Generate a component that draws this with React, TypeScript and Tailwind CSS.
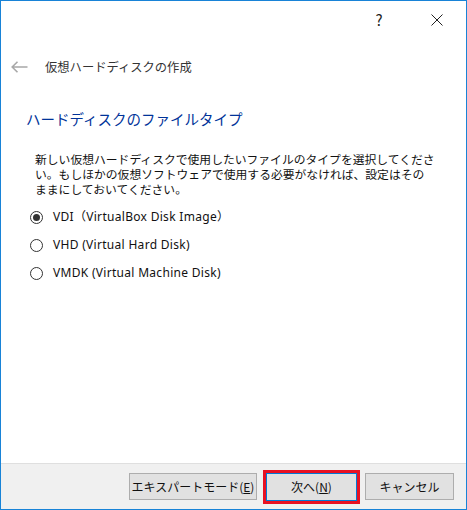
import React, { useState } from "react";

const font = { fontFamily: '"Noto Sans CJK JP", "Noto Sans", sans-serif' };
const latin = { fontFamily: '"Noto Sans", "Noto Sans CJK JP", sans-serif' };

const OPTIONS = [
  { id: "vdi", label: "VDI（VirtualBox Disk Image）" },
  { id: "vhd", label: "VHD (Virtual Hard Disk)" },
  { id: "vmdk", label: "VMDK (Virtual Machine Disk)" },
];

function Radio({ checked }: { checked: boolean }) {
  return (
    <span className="flex h-[13px] w-[13px] items-center justify-center rounded-full border border-[#333333] bg-white">
      {checked && <span className="h-[7px] w-[7px] rounded-full bg-[#333333]" />}
    </span>
  );
}

export default function App() {
  const [sel, setSel] = useState("vdi");
  return (
    <div
      className="flex h-[510px] w-[467px] flex-col border border-[#1883d7] bg-white text-[12px] text-[#1a1a1a]"
      style={font}
    >
      {/* タイトルバー */}
      <div className="flex h-[39px] items-start justify-end">
        <div className="mt-[9px] flex items-center">
          <span className="w-[20px] text-center text-[15px] leading-[20px] text-[#222]">?</span>
          <svg width="12" height="12" viewBox="0 0 12 12" className="ml-[42px] mr-[23px]">
            <path d="M0.5 0.5 L11.5 11.5 M11.5 0.5 L0.5 11.5" stroke="#222" strokeWidth="1" />
          </svg>
        </div>
      </div>

      {/* 戻る + タイトル */}
      <div className="mt-[15px] flex h-[24px] items-center pl-[10px]">
        <svg width="17" height="12" viewBox="0 0 17 12">
          <path d="M1 6 H16.5 M6.5 0.8 L1.2 6 L6.5 11.2" stroke="#a8a8a8" strokeWidth="1.6" fill="none" />
        </svg>
        <span className="ml-[17px] text-[12.3px] text-[#333333]">仮想ハードディスクの作成</span>
      </div>

      {/* 見出し */}
      <div className="mt-[29px] h-[21px] pl-[25px] text-[14.5px] leading-[21px] text-[#003399]">
        ハードディスクのファイルタイプ
      </div>

      {/* 説明 */}
      <p className="mt-[22px] whitespace-nowrap pl-[34px] text-[11.8px] leading-[15px] text-[#111]">
        新しい仮想ハードディスクで使用したいファイルのタイプを選択してくださ
        <br />
        い。もしほかの仮想ソフトウェアで使用する必要がなければ、設定はその
        <br />
        ままにしておいてください。
      </p>

      {/* ラジオ */}
      <div className="mt-[7px] flex flex-col pl-[29px]">
        {OPTIONS.map((o) => (
          <label key={o.id} className="flex h-[28px] cursor-default items-center" onClick={() => setSel(o.id)}>
            <Radio checked={sel === o.id} />
            <span className="ml-[10px] text-[12px] tracking-[0.3px] text-[#111]" style={latin}>
              {o.label}
            </span>
          </label>
        ))}
      </div>

      <div className="flex-1" />

      {/* フッター */}
      <div className="flex h-[46px] items-center justify-end border-t border-[#dfdfdf] bg-[#f0f0f0] pr-[12px]">
        <button className="h-[27px] w-[128px] border border-[#adadad] bg-[#e1e1e1] text-[12px] text-[#111]">
          エキスパートモード(<span className="underline">E</span>)
        </button>
        <button className="ml-[9px] h-[28px] w-[91px] border border-[#0078d7] bg-[#e1e1e1] text-[12px] text-[#111] outline-[3px] outline-[#e81123] outline-solid">
          次へ(<span className="underline">N</span>)
        </button>
        <button className="ml-[8px] h-[27px] w-[89px] border border-[#adadad] bg-[#e1e1e1] text-[12px] text-[#111]">
          キャンセル
        </button>
      </div>
    </div>
  );
}
